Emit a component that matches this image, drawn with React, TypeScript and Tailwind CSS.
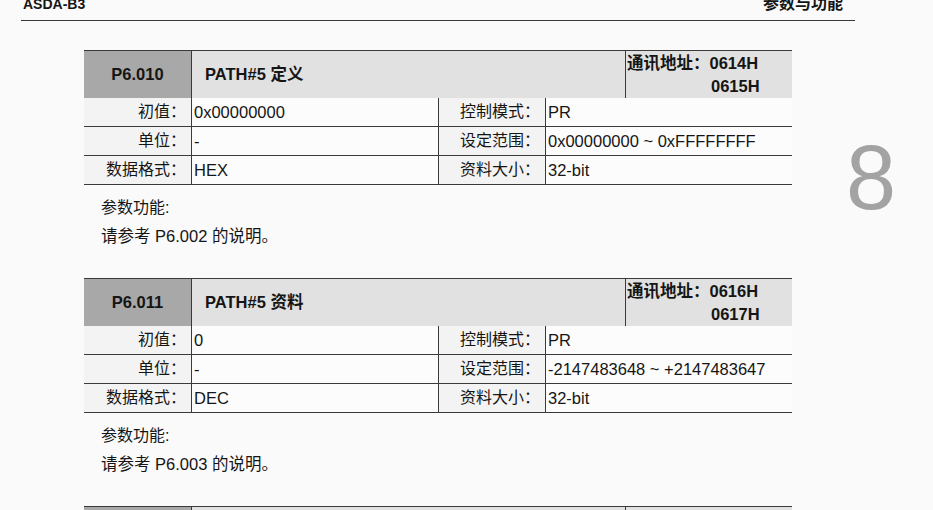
import React from "react";

interface Param {
  code: string;
  name: string;
  addr: [string, string];
  init: string;
  unit: string;
  format: string;
  mode: string;
  range: string;
  size: string;
  ref: string;
}

const params: Param[] = [
  {
    code: "P6.010",
    name: "PATH#5 定义",
    addr: ["0614H", "0615H"],
    init: "0x00000000",
    unit: "-",
    format: "HEX",
    mode: "PR",
    range: "0x00000000 ~ 0xFFFFFFFF",
    size: "32-bit",
    ref: "P6.002",
  },
  {
    code: "P6.011",
    name: "PATH#5 资料",
    addr: ["0616H", "0617H"],
    init: "0",
    unit: "-",
    format: "DEC",
    mode: "PR",
    range: "-2147483648 ~ +2147483647",
    size: "32-bit",
    ref: "P6.003",
  },
  {
    code: "P6.012",
    name: "PATH#6 定义",
    addr: ["0618H", "0619H"],
    init: "0x00000000",
    unit: "-",
    format: "HEX",
    mode: "PR",
    range: "0x00000000 ~ 0xFFFFFFFF",
    size: "32-bit",
    ref: "P6.002",
  },
];

const font = "font-['Liberation_Sans','Noto_Sans_CJK_SC',sans-serif]";

const Row = ({ l1, v1, l2, v2 }: { l1: string; v1: string; l2: string; v2: string }) => (
  <div className="grid grid-cols-[107px_247px_107px_247px] h-[29px] border-b border-[#3a3a3a] text-[16.5px] leading-[28px]">
    <div className="bg-[#f3f3f3] text-right pr-[5px] text-[16px]">{l1}</div>
    <div className="bg-[#fcfcfc] border-l border-[#3a3a3a] pl-[2px]">{v1}</div>
    <div className="bg-[#f3f3f3] border-l border-[#3a3a3a] text-right pr-[5px] text-[16px]">{l2}</div>
    <div className="bg-[#fcfcfc] border-l border-[#3a3a3a] pl-[2px]">{v2}</div>
  </div>
);

const ParamTable = ({ p }: { p: Param }) => (
  <div>
    <div className="border-t border-[#3a3a3a]">
      <div className="grid grid-cols-[107px_434px_167px] h-[47px] border-b border-[#3a3a3a] font-bold text-[16.5px]">
        <div className="bg-[#a8a8a8] flex items-center justify-center">{p.code}</div>
        <div className="bg-[#e1e1e1] border-l border-[#3a3a3a] flex items-center pl-[13px]">{p.name}</div>
        <div className="bg-[#e1e1e1] border-l border-[#3a3a3a] pl-[1px] pt-[1px] leading-[23px]">
          <div>通讯地址：{p.addr[0]}</div>
          <div className="pl-[84px]">{p.addr[1]}</div>
        </div>
      </div>
      <Row l1="初值：" v1={p.init} l2="控制模式：" v2={p.mode} />
      <Row l1="单位：" v1={p.unit} l2="设定范围：" v2={p.range} />
      <Row l1="数据格式：" v1={p.format} l2="资料大小：" v2={p.size} />
    </div>
    <div className="pl-[17px] pt-[8px] pb-[27px] text-[16px] leading-[29px]">
      <div>参数功能:</div>
      <div className="text-[16.5px]">请参考 {p.ref} 的说明。</div>
    </div>
  </div>
);

export default function App() {
  return (
    <div className={`w-[933px] h-[510px] overflow-hidden bg-[#fafafa] text-[#151515] ${font}`}>
      <div className="ml-[21px] w-[834px] h-[21px] border-b border-[#3a3a3a] flex justify-between items-start">
        <div className="-mt-[4px] ml-[2px] text-[14px] leading-[16px] font-bold">ASDA-B3</div>
        <div className="-mt-[5px] mr-[12px] text-[16px] leading-[18px] font-bold">参数与功能</div>
      </div>
      <div className="flex mt-[29px]">
        <div className="ml-[84px] w-[708px]">
          {params.map((p) => (
            <ParamTable key={p.code} p={p} />
          ))}
        </div>
        <div className="ml-[54px] mt-[83px] text-[90px] leading-[90px] text-[#a3a3a3] font-['Liberation_Sans',sans-serif]">
          8
        </div>
      </div>
    </div>
  );
}
